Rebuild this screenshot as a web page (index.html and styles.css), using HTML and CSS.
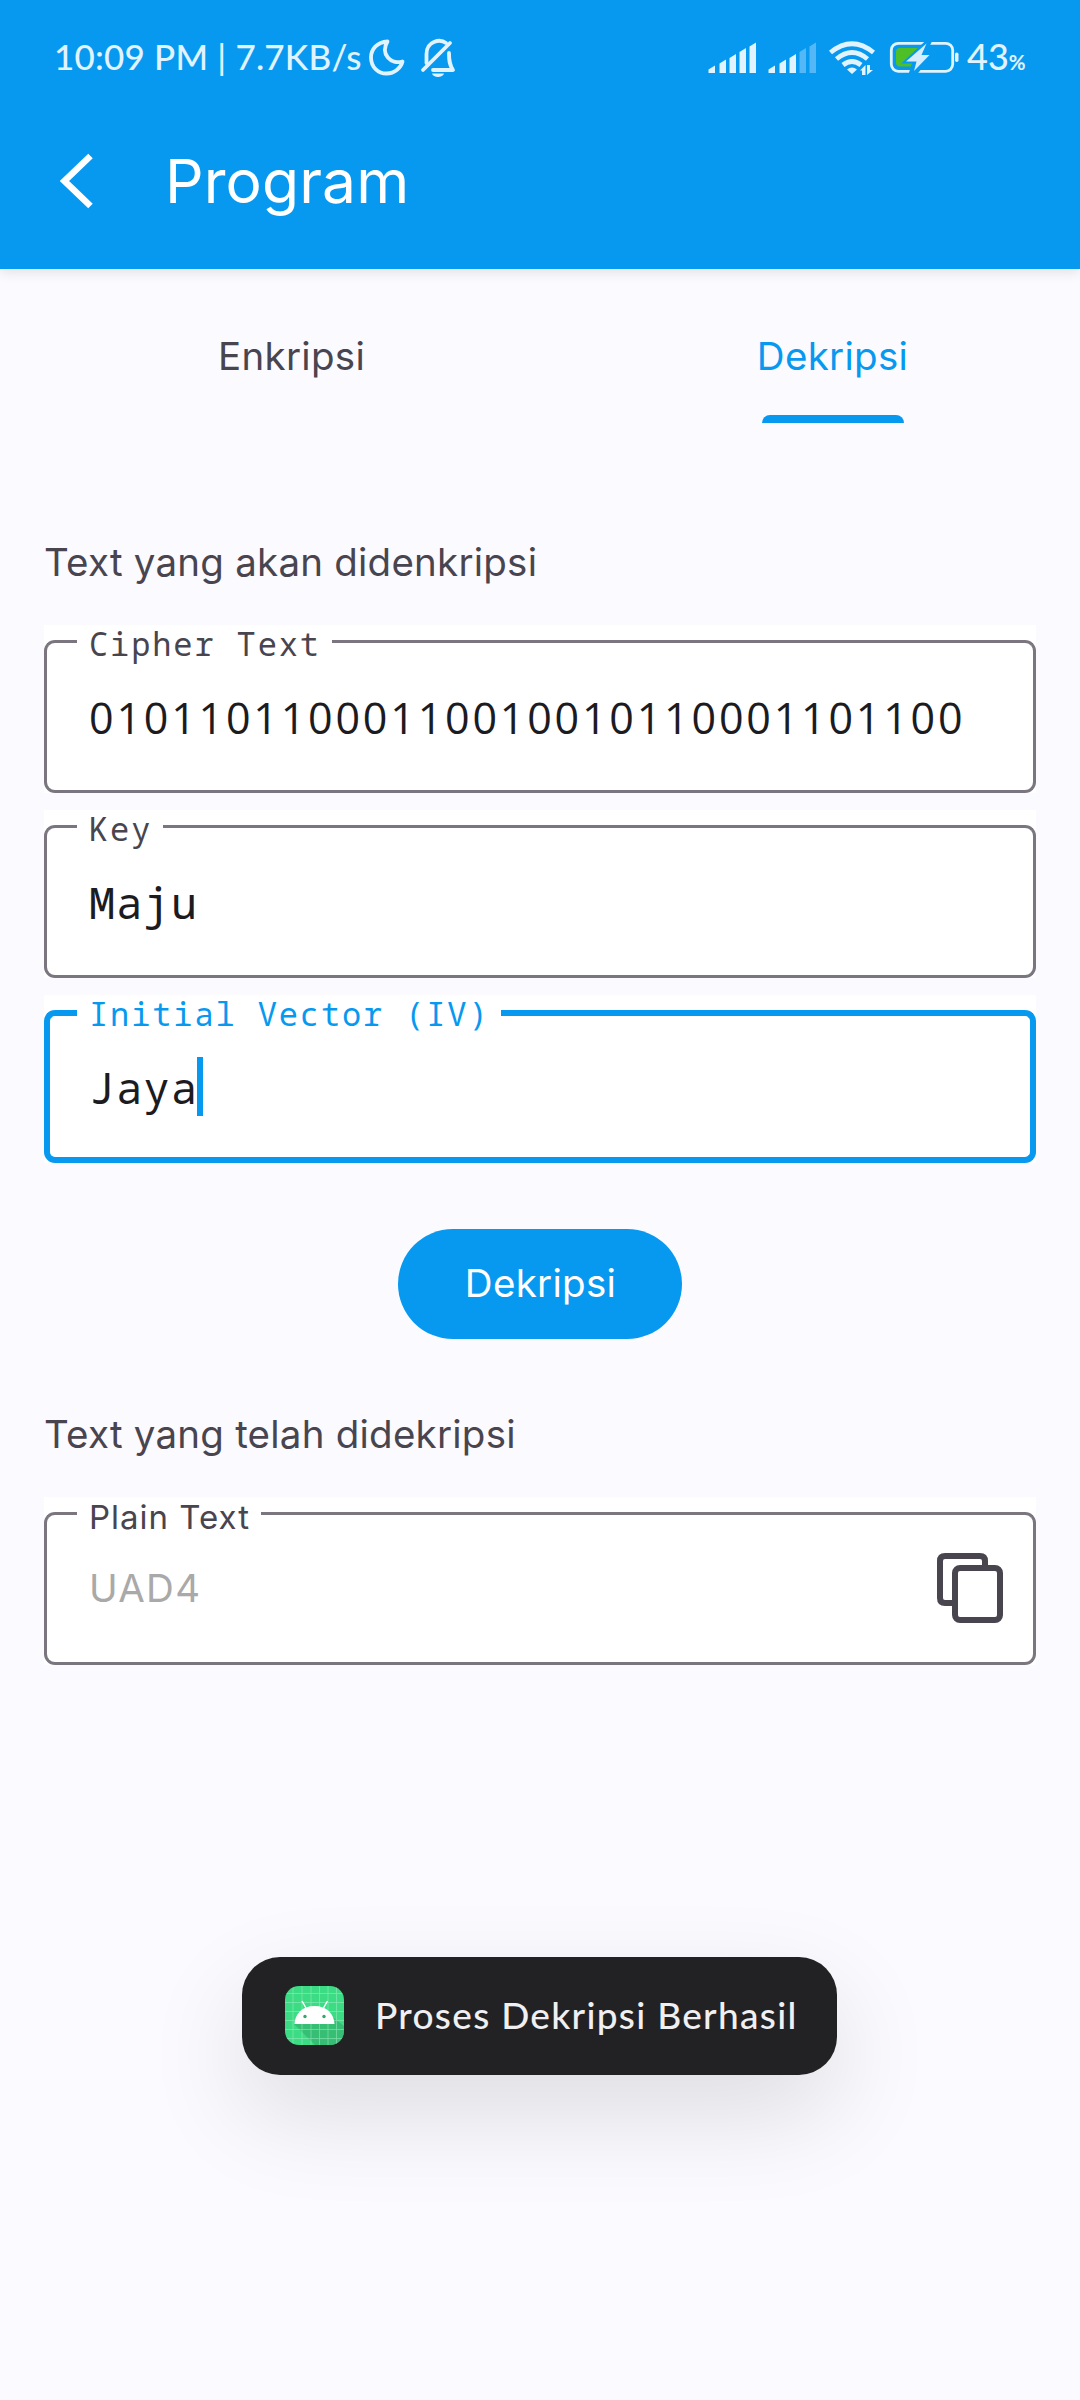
FILE: index.html
```html
<!DOCTYPE html>
<html lang="id">
<head>
<meta charset="utf-8">
<title>Program</title>
<link rel="stylesheet" href="styles.css">
</head>
<body>
<header class="header">
  <div class="status">
    <span class="clock">10:09 PM | 7.7KB/s</span>
    <svg class="status-left" width="100" height="44" viewBox="0 0 100 44">
      <g fill="none" stroke="#e1f3fe" stroke-width="3.8" stroke-linejoin="round" stroke-linecap="round">
        <path d="M20.500 4.500 C10 5 4 12.500 4 20.500 C4 30 11 36.500 19.500 36.500 C28 36.500 34 30.500 35.500 24.500 C24 28 13 17 20.500 4.500Z"/>
        <path d="M56 33 L83 6"/>
        <path d="M59.500 26 V17 C59.500 4 73 1.500 79 6"/>
        <path d="M82 16 C82 24 82.500 28 86 33 H66"/>
      </g>
      <path d="M65 36.500 H77 C76 41 66 41 65 36.500Z" fill="#e1f3fe"/>
    </svg>
    <svg class="status-right" width="260" height="40" viewBox="0 0 260 40">
      <g fill="#e1f3fe">
        <path d="M.5 33V29.500L7 25.500V33ZM11.500 33V23.500L18 19.500V33ZM21.500 33V18L28 14V33ZM31.500 33V12L38 8V33ZM41.500 33V6.500L48 2.500V33Z"/>
        <path d="M60.500 33V29.500L67 25.500V33ZM71.500 33V23.500L78 19.500V33ZM81.500 33V18L88 14V33Z"/>
        <path opacity=".35" d="M91.500 33V12L98 8V33ZM101.500 33V6.500L108 2.500V33Z"/>
      </g>
      <g fill="none" stroke="#e1f3fe" stroke-width="4.800">
        <path d="M122.500 12.500Q144 -5 165.500 12.500"/>
        <path d="M128.500 19Q144 6 159.500 19"/>
        <path d="M135 25Q144 18 153 25"/>
      </g>
      <path d="M139 29.500Q144 25.500 149 29.500L144 34ZM152 30.500L157.500 25V35H154V30.500ZM159 25H162V30H165L159 35Z" fill="#e1f3fe"/>
      <rect x="183.300" y="3.300" width="61.400" height="28" rx="7" fill="none" stroke="#e1f3fe" stroke-width="2.800"/>
      <rect x="188" y="8" width="26" height="18.500" rx="4" fill="#4fbf26"/>
      <path d="M219.500 1L197 22H206L202 34.500H207L224 13.500H216L222.500 1Z" fill="#0799f0" stroke="#0799f0" stroke-width="3"/>
      <path d="M218.500 3.500L198 21.500H208.500L206 31L221.500 15H213.500Z" fill="#d6edfd"/>
      <rect x="247" y="12.500" width="3.500" height="9.500" rx="1.700" fill="#e1f3fe"/>
    </svg>
    <span class="percent">43<small>%</small></span>
  </div>
  <div class="bar">
    <svg width="36" height="56" viewBox="0 0 36 56"><path d="M30.500 3L4.500 28L30.500 53" fill="none" stroke="#fff" stroke-width="6.500"/></svg>
    <h1 class="title">Program</h1>
  </div>
</header>
<nav class="tabs">
  <a class="tab">Enkripsi</a>
  <a class="tab active">Dekripsi</a>
</nav>
<main class="content">
  <p class="caption">Text yang akan didenkripsi</p>
  <div class="field mono">
    <div class="edge"><i class="corner"></i><span class="label">Cipher Text</span><i class="line"></i></div>
    <div class="box"><span class="value digits">01011011000110010010110001101100</span></div>
  </div>
  <div class="field mono">
    <div class="edge"><i class="corner"></i><span class="label">Key</span><i class="line"></i></div>
    <div class="box"><span class="value">Maju</span></div>
  </div>
  <div class="field mono focus">
    <div class="edge"><i class="corner"></i><span class="label">Initial Vector (IV)</span><i class="line"></i></div>
    <div class="box"><span class="value">Jaya</span><i class="cursor"></i></div>
  </div>
  <button class="button">Dekripsi</button>
  <p class="caption">Text yang telah didekripsi</p>
  <div class="field">
    <div class="edge"><i class="corner"></i><span class="label">Plain Text</span><i class="line"></i></div>
    <div class="box"><span class="value">UAD4</span>
      <svg class="copy" width="66" height="70" viewBox="0 0 66 70" fill="none" stroke="#49454f" stroke-width="6"><path d="M15 50H8Q3 50 3 45V8Q3 3 8 3H43Q48 3 48 8V15"/><rect x="18" y="15" width="45" height="52" rx="5"/></svg>
    </div>
  </div>
</main>
<div class="toast">
  <svg width="59" height="59" viewBox="0 0 59 59">
    <defs><clipPath id="tile"><rect width="59" height="59" rx="14"/></clipPath></defs>
    <g clip-path="url(#tile)">
      <rect width="59" height="59" fill="#3ddc84"/>
      <path d="M9 38L30 59H59V40L49 32Z" fill="#36b472" opacity=".75"/>
      <path d="M8 0V59M17 0V59M26 0V59M34.500 0V59M43 0V59M51.500 0V59M0 7.500H59M0 16.500H59M0 25.500H59M0 34.500H59M0 43.500H59M0 52.500H59" stroke="#a5f0c6" stroke-width=".8" opacity=".6"/>
      <path d="M9.500 38C10 28 17 20 29.500 20S49 28 49.500 38Z" fill="#fff"/>
      <path d="M21 22L17 15M38.500 22L42.500 15" stroke="#fff" stroke-width="1.500"/>
      <circle cx="20" cy="30.500" r="1.700" fill="#36a86a"/><circle cx="39" cy="30.500" r="1.700" fill="#36a86a"/>
    </g>
  </svg>
  <span class="message">Proses Dekripsi Berhasil</span>
</div>
</body>
</html>
```

FILE: styles.css
```css
* { box-sizing: border-box; }
body {
  margin: 0;
  width: 1080px;
  height: 2400px;
  overflow: hidden;
  background: #fbfaff;
  color: #49454f;
  font-family: Inter, sans-serif;
  font-size: 38.5px;
  display: flex;
  flex-direction: column;
}
.header {
  height: 269px;
  background: #0799f0;
  color: #fff;
  box-shadow: 0 3px 12px rgba(0, 0, 0, .11);
  flex: none;
}
.status {
  height: 94px;
  padding: 20px 0 0 54px;
  display: flex;
  align-items: flex-start;
  color: #e1f3fe;
  font-family: Lato, sans-serif;
  font-weight: 500;
  font-size: 35px;
  line-height: 73px;
}
.clock { width: 313px; letter-spacing: .2px; white-space: nowrap; flex: none; }
.status-left { margin-top: 17px; flex: none; }
.status-right { margin: 20px 0 0 241px; flex: none; }
.percent { font-size: 36px; margin-left: -1px; }
.percent small { font-size: 20.5px; font-weight: 700; }
.bar { display: flex; padding-left: 60px; align-items: center; height: 174px; }
.title { margin: -1px 0 0 69px; font-weight: 400; font-size: 60.5px; line-height: 80px; letter-spacing: .1px; }
.tabs { display: grid; grid-template-columns: 540px 540px; height: 154px; }
.tab {
  padding: 63px 0 0 43px;
  line-height: 48px;
  display: flex;
  flex-direction: column;
  align-items: center;
  justify-content: space-between;
  letter-spacing: .3px;
}
.active { color: #0799f0; padding-left: 45px; }
.active::after { content: ""; width: 142px; height: 8px; border-radius: 8px 8px 0 0; background: #0799f0; }
.content { padding: 115px 44px 0; display: flex; flex-direction: column; }
.caption { margin: 0 0 39px; line-height: 48px; height: 48px; letter-spacing: .23px; }
.field {
  --line: #7a757f;
  --width: 3px;
  height: 168px;
  margin-bottom: 17px;
  background: #fff;
  display: flex;
  flex-direction: column;
}
.focus { --line: #0799f0; --width: 6px; }
.edge { height: 40px; display: flex; align-items: flex-start; }
.edge i { height: 25px; margin-top: 15px; border-top: var(--width) solid var(--line); }
.corner { width: 33px; border-left: var(--width) solid var(--line); border-top-left-radius: 11px; }
.line { flex: 1; border-right: var(--width) solid var(--line); border-top-right-radius: 11px; }
.label { padding: 0 11px 0 12px; font-size: 33px; line-height: 40px; letter-spacing: 1px; white-space: pre; }
.focus .label { color: #0799f0; }
.box {
  flex: 1;
  border: var(--width) solid var(--line);
  border-top: 0;
  border-radius: 0 0 11px 11px;
  padding-left: calc(45px - var(--width));
  display: flex;
  align-items: flex-start;
}
.value { padding-top: 13px; color: #a9a9a9; line-height: 76px; letter-spacing: 1.300px; }
.mono { font-family: "Noto Sans Mono", "DejaVu Sans Mono", monospace; }
.mono .label { padding-right: 11px; font-size: 32px; line-height: 38px; letter-spacing: 1.880px; }
.mono .value { padding-top: 14px; color: #1c1b1f; font-size: 43.500px; letter-spacing: 1.200px; }
.mono .digits { padding-top: 15px; font-family: "Open Sans", sans-serif; font-size: 43px; letter-spacing: 2.800px; }
.cursor { width: 6px; height: 59px; margin: 22px 0 0 -1px; background: #0799f0; }
.copy { margin: 16px 30px 0 auto; }
.button {
  align-self: center;
  width: 284px;
  height: 110px;
  margin: 49px 0 71px;
  padding: 0 0 2px 1px;
  border: 0;
  border-radius: 55px;
  background: #0799f0;
  color: #fff;
  font: inherit;
  letter-spacing: .3px;
}
.toast {
  position: absolute;
  left: 242px;
  top: 1957px;
  width: 595px;
  height: 118px;
  border-radius: 38px;
  background: #222224;
  box-shadow: 0 38px 100px rgba(0, 0, 0, .12);
  padding-left: 43px;
  display: flex;
  align-items: center;
}
.toast svg { margin-top: -1px; }
.message { margin: -3px 0 0 31px; color: #f0eff2; font-family: Lato, sans-serif; font-weight: 500; font-size: 37px; letter-spacing: 1.300px; white-space: nowrap; }
```
